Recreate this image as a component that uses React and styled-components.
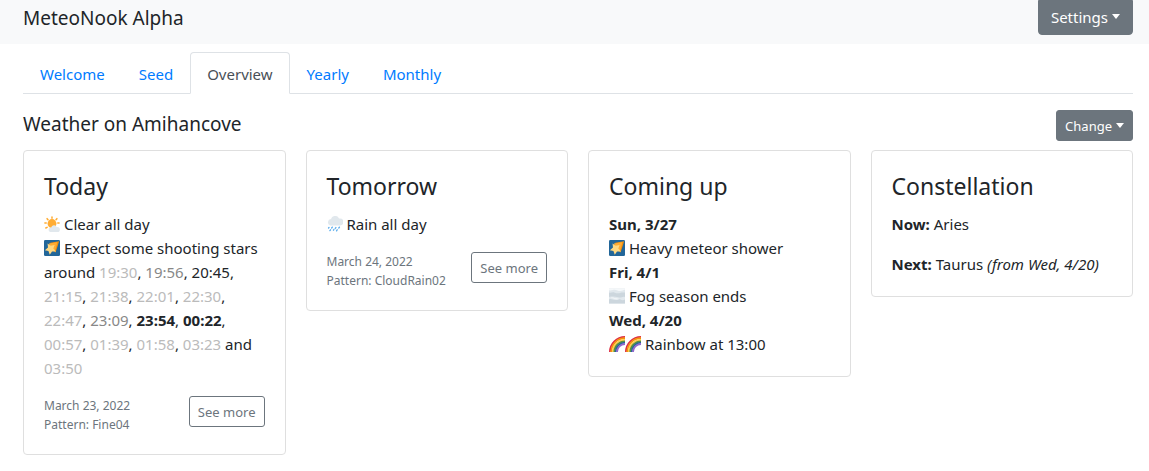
import * as React from "react"
import styled, { createGlobalStyle } from 'styled-components';

const GlobalStyle = createGlobalStyle`
  *, *::before, *::after {
    box-sizing: border-box;
  }

  body {
    margin: 0;
    background: #fff;
    color: #212529;
    font-family: "Noto Sans", "Open Sans", sans-serif;
    font-size: 15px;
    line-height: 24px;
  }
`;

const Navbar = styled.header`
  display: flex;
  align-items: flex-start;
  justify-content: space-between;
  padding: 0 16px 9px 23px;
  background: #f8f9fa;
`;

const Brand = styled.a`
  padding-top: 3px;
  color: #212529;
  font-size: 19px;
  line-height: 30px;
  text-decoration: none;
`;

const Button = styled.button`
  display: inline-flex;
  align-items: center;
  flex-shrink: 0;
  border: 1px solid #6c757d;
  border-radius: ${props => props.$docked ? '0 0 4px 4px' : '3px'};
  padding: ${props => props.$docked ? '5px 12px' : '5px 8px 3px'};
  background: ${props => props.$outline ? 'transparent' : '#6c757d'};
  color: ${props => props.$outline ? '#6c757d' : '#fff'};
  font-family: inherit;
  font-size: ${props => props.$docked ? '15px' : '13px'};
  line-height: ${props => props.$docked ? '23px' : '21px'};
  cursor: pointer;
`;

const Caret = styled.span`
  margin: 0 0 2px 4px;
  border-top: 5px solid;
  border-left: 4px solid transparent;
  border-right: 4px solid transparent;
`;

const Page = styled.main`
  padding: 8px 16px 16px 23px;
`;

const Tabs = styled.nav`
  display: flex;
  border-bottom: 1px solid #dee2e6;
  margin-bottom: 16px;
`;

const Tab = styled.a`
  margin-bottom: -1px;
  border: 1px solid transparent;
  border-radius: 4px 4px 0 0;
  padding: 9px 16px 7px;
  color: #007bff;
  text-decoration: none;

  &[aria-current] {
    border-color: #dee2e6 #dee2e6 #fff;
    background: #fff;
    color: #495057;
  }
`;

const Toolbar = styled.div`
  display: flex;
  align-items: flex-start;
  justify-content: space-between;
  margin-bottom: 9px;
`;

const Heading = styled.h1`
  margin: 0;
  font-size: 19px;
  font-weight: 400;
  line-height: 28px;
`;

const Deck = styled.div`
  display: grid;
  grid-template-columns: repeat(4, 1fr);
  align-items: start;
  gap: 20px;

  @media (max-width: 750px) {
    grid-template-columns: 1fr;
  }
`;

const Card = styled.section`
  border: 1px solid #dfdfdf;
  border-radius: 4px;
  padding: 20px;
`;

const CardTitle = styled.h2`
  margin: 0 0 10px;
  font-size: 23px;
  font-weight: 400;
  line-height: 31px;
`;

const Text = styled.p`
  margin: 0 0 16px;

  &:last-child {
    margin-bottom: 0;
  }
`;

const Time = styled.span`
  color: ${props => ({low: '#bbb', mid: '#888'})[props.$level] || 'inherit'};
  font-weight: ${props => props.$level === 'high' ? 700 : 400};
`;

const CardFooter = styled.div`
  display: flex;
  align-items: flex-start;
  justify-content: space-between;
`;

const Meta = styled.small`
  color: #6c757d;
  font-size: 12px;
  line-height: 19px;
`;

const Emoji = styled.svg`
  display: inline-block;
  width: 16px;
  height: 16px;
  vertical-align: -2px;
`;

const Sun = () => (
  <Emoji viewBox="0 0 36 36" role="img" aria-label="Clear">
    <g stroke="#ffac33" strokeWidth="3.4" strokeLinecap="round">
      <path d="M18 2v3M7 6l2 2.500M29 6l-2 2.500M2 16h3M34 16h-3M4 27l3-1.500" />
    </g>
    <circle cx="18" cy="17" r="10" fill="#ffac33" />
    <path fill="#e1e8ed" d="M30 24.500c-.5 0-1 .1-1.400.2A6.500 6.500 0 0 0 16.200 26a4.800 4.800 0 0 0-1.700 10H30a5.700 5.700 0 0 0 0-11.500z" />
  </Emoji>
);

const Rain = () => (
  <Emoji viewBox="0 0 36 36" role="img" aria-label="Rain">
    <path fill="#e1e8ed" d="M29 5.500c-.7 0-1.400.1-2 .3A9.500 9.500 0 0 0 9 6.800 7.600 7.600 0 0 0 7 21.500h22a8 8 0 0 0 0-16z" />
    <path stroke="#5dadec" strokeWidth="3" strokeLinecap="round" d="M4.500 26l-1 1M12 25l-1.500 2M20 26l-1.500 2M28 25l-1.500 2M8 31l-1.500 2M15.500 30.500l-1 1.500M23 31l-1.500 2.500" />
  </Emoji>
);

const Meteor = () => (
  <Emoji viewBox="0 0 36 36" role="img" aria-label="Shooting star">
    <rect width="36" height="36" rx="3" fill="#269" />
    <path fill="#f4900c" d="M34 3L14 6l3 14 9 8z" />
    <path fill="#ffac33" d="M30 5L11 8l4 12 10 4z" />
    <path fill="#ffd983" d="M8 8l7 5 9-2-3 8 6 7-9 0-5 7-3-8-8-2 7-6z" />
  </Emoji>
);

const Fog = () => (
  <Emoji viewBox="0 0 36 36" role="img" aria-label="Fog">
    <path fill="#e1e8ed" d="M0 1h36v34H0z" />
    <path fill="#f5f8fa" d="M0 1h36v3c-5 0-6 3-11 3S16 3 11 4 4 6 0 5z" />
    <path fill="#ccd6dd" d="M0 10c5 2 7-2 12 0s8 3 13 1 7 0 11-1v10c-6-2-9 3-15 1S8 18 0 20zM0 26c6-3 9 2 14 1s8-3 12-1 6 2 10 0v9H0z" />
    <path fill="#f5f8fa" d="M4 22c5-2 8 1 11 1s6 1 8 1-6 3-10 1-6-1-9-3z" />
  </Emoji>
);

const Rainbow = () => (
  <Emoji viewBox="0 0 36 36" role="img" aria-label="Rainbow">
    <g fill="none" strokeWidth="4">
      <path stroke="#dd2e44" d="M2 36A34 34 0 0 1 36 2" />
      <path stroke="#f4900c" d="M5 36A31 31 0 0 1 36 5" />
      <path stroke="#ffcc4d" d="M8.500 36A27.500 27.500 0 0 1 36 8.500" />
      <path stroke="#5c913b" d="M12 36A24 24 0 0 1 36 12" />
      <path stroke="#269" d="M15 36A21 21 0 0 1 36 15" />
      <path stroke="#9266cc" d="M18 36A18 18 0 0 1 36 18" />
    </g>
  </Emoji>
);

const tabs = ['Welcome', 'Seed', 'Overview', 'Yearly', 'Monthly'];

const showers = [
  ['19:30', 'low'], ['19:56', 'mid'], ['20:45', 'normal'],
  ['21:15', 'low'], ['21:38', 'low'], ['22:01', 'low'], ['22:30', 'low'],
  ['22:47', 'low'], ['23:09', 'mid'], ['23:54', 'high'], ['00:22', 'high'],
  ['00:57', 'low'], ['01:39', 'low'], ['01:58', 'low'], ['03:23', 'low'],
  ['03:50', 'low'],
];

const separator = (i) => {
  if (i === 0) return '';
  return i === showers.length - 1 ? ' and ' : ', ';
}

const DayFooter = ({date, pattern}) => (
  <CardFooter>
    <Meta>
      {date}<br />
      Pattern: {pattern}
    </Meta>
    <Button type="button" $outline>See more</Button>
  </CardFooter>
);

const App = () => {
  return (
    <>
      <GlobalStyle />
      <Navbar>
        <Brand href="#">MeteoNook Alpha</Brand>
        <Button type="button" aria-haspopup="true" $docked>Settings<Caret /></Button>
      </Navbar>
      <Page>
        <Tabs>
          {tabs.map(d => (
            <Tab key={d} href={'#' + d.toLowerCase()} aria-current={d === 'Overview' ? 'page' : undefined}>{d}</Tab>
          ))}
        </Tabs>
        <Toolbar>
          <Heading>Weather on Amihancove</Heading>
          <Button type="button" aria-haspopup="true">Change<Caret /></Button>
        </Toolbar>
        <Deck>
          <Card>
            <CardTitle>Today</CardTitle>
            <Text>
              <Sun /> Clear all day<br />
              <Meteor /> Expect some shooting stars around{' '}
              {showers.map(([time, level], i) => (
                <React.Fragment key={time}>
                  {separator(i)}<Time $level={level}>{time}</Time>
                </React.Fragment>
              ))}
            </Text>
            <DayFooter date="March 23, 2022" pattern="Fine04" />
          </Card>
          <Card>
            <CardTitle>Tomorrow</CardTitle>
            <Text><Rain /> Rain all day</Text>
            <DayFooter date="March 24, 2022" pattern="CloudRain02" />
          </Card>
          <Card>
            <CardTitle>Coming up</CardTitle>
            <Text>
              <strong>Sun, 3/27</strong><br />
              <Meteor /> Heavy meteor shower<br />
              <strong>Fri, 4/1</strong><br />
              <Fog /> Fog season ends<br />
              <strong>Wed, 4/20</strong><br />
              <Rainbow /><Rainbow /> Rainbow at 13:00
            </Text>
          </Card>
          <Card>
            <CardTitle>Constellation</CardTitle>
            <Text><strong>Now:</strong> Aries</Text>
            <Text><strong>Next:</strong> Taurus <em>(from Wed, 4/20)</em></Text>
          </Card>
        </Deck>
      </Page>
    </>
  )
}

export default App;
